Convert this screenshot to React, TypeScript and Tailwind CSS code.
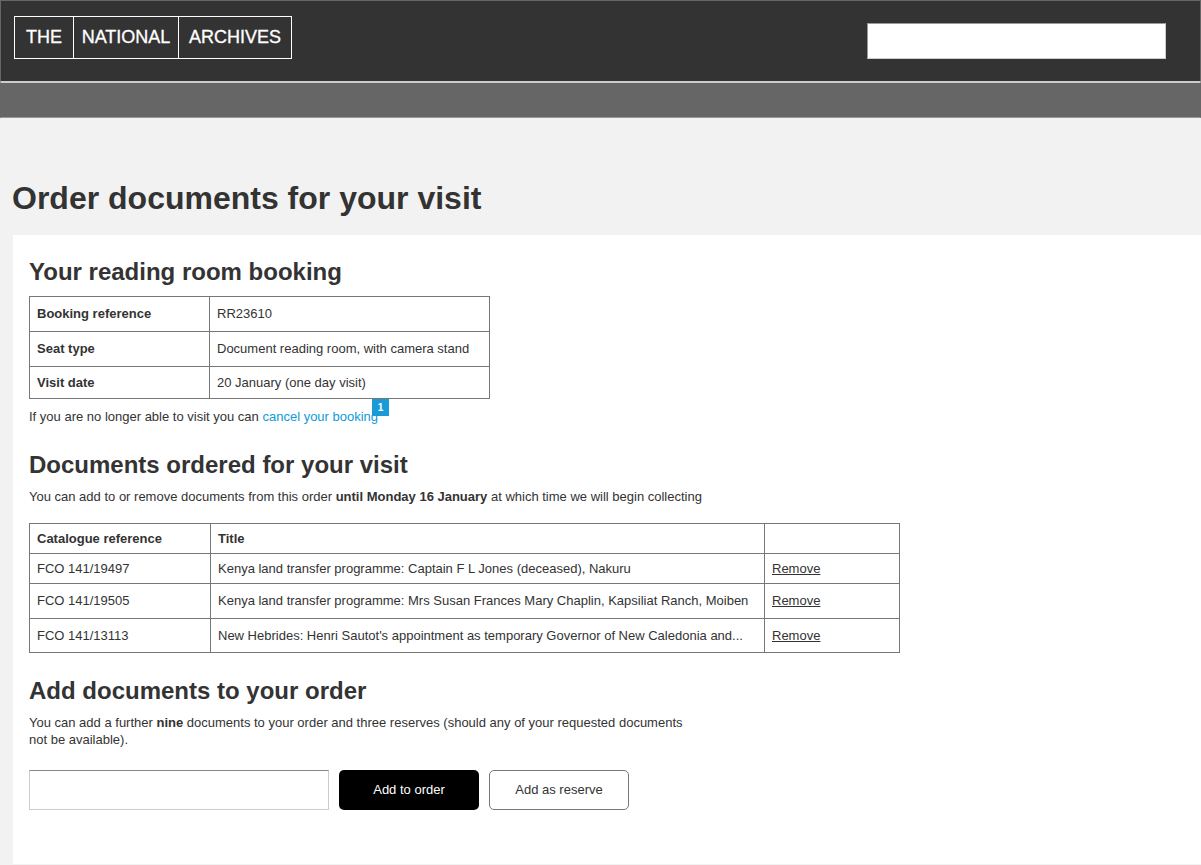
import React from "react";

const docs = [
  ["FCO 141/19497", "Kenya land transfer programme: Captain F L Jones (deceased), Nakuru", "h-[30px]", ""],
  ["FCO 141/19505", "Kenya land transfer programme: Mrs Susan Frances Mary Chaplin, Kapsiliat Ranch, Moiben", "h-[35px]", "pb-[2px]"],
  ["FCO 141/13113", "New Hebrides: Henri Sautot's appointment as temporary Governor of New Caledonia and...", "h-[34px]", ""],
];

const bookingRows = [
  ["Booking reference", "RR23610", "h-[35px]", "pb-[2px]"],
  ["Seat type", "Document reading room, with camera stand", "h-[35px]", "pb-[2px]"],
  ["Visit date", "20 January (one day visit)", "h-[32px]", ""],
];

export default function App() {
  return (
    <div className="min-h-[865px] bg-[#f2f2f2] text-[#333] text-[13px] leading-[17px] font-['Liberation_Sans',Arial,sans-serif]">
      <header className="h-[82px] bg-[#333] border border-[#666] border-b-[#ccc] flex justify-between pl-[13px] pr-[34px] pt-[15px]">
        <div className="flex h-[43px] border border-white text-white text-[18px] leading-[40px] box-border [-webkit-text-stroke:0.3px_white]">
          <div className="w-[59px] text-center border-r border-white">THE</div>
          <div className="w-[105px] text-center border-r border-white">NATIONAL</div>
          <div className="w-[112px] text-center">ARCHIVES</div>
        </div>
        <input className="w-[299px] h-[36px] mt-[7px] bg-white border border-[#ccc] border-t-[#999] border-l-[#999] box-border" aria-label="Search" />
      </header>
      <div className="h-[36px] bg-[#666] border border-[#666] border-t-[#ccc] border-b-[#999]" />
      <h1 className="mt-[62px] ml-[12px] h-[36px] text-[32px] leading-[36px] font-bold">Order documents for your visit</h1>
      <main className="mt-[19px] ml-[13px] h-[629px] bg-white pl-[16px] pt-[22px]">
        <h2 className="text-[24px] leading-[30px] font-bold">Your reading room booking</h2>
        <table className="mt-[9px] w-[461px] border-collapse table-fixed">
          <tbody>
            {bookingRows.map(([a, b, h, pad]) => (
              <tr key={a} className={h}>
                <th className={`w-[180px] border border-[#777] pl-[7px] text-left font-bold ${pad}`}>{a}</th>
                <td className={`border border-[#777] pl-[7px] ${pad}`}>{b}</td>
              </tr>
            ))}
          </tbody>
        </table>
        <p className="mt-[9px]">
          If you are no longer able to visit you can{" "}
          <span className="relative text-[#0f9bd7]">
            cancel your booking
            <span className="absolute -right-[11px] -top-[10px] w-[17px] h-[17px] bg-[#1a9bd7] text-white text-[10px] leading-[17px] font-bold text-center">1</span>
          </span>
        </p>
        <h2 className="mt-[25px] text-[24px] leading-[30px] font-bold">Documents ordered for your visit</h2>
        <p className="mt-[8px]">
          You can add to or remove documents from this order <b>until Monday 16 January</b> at which time we will begin collecting
        </p>
        <table className="mt-[18px] w-[871px] border-collapse table-fixed">
          <thead>
            <tr className="h-[30px]">
              <th className="w-[181px] border border-[#777] pl-[7px] text-left font-bold">Catalogue reference</th>
              <th className="w-[554px] border border-[#777] pl-[7px] text-left font-bold">Title</th>
              <th className="border border-[#777]" />
            </tr>
          </thead>
          <tbody>
            {docs.map(([ref, title, h, pad]) => (
              <tr key={ref} className={h}>
                <td className={`border border-[#777] pl-[7px] ${pad}`}>{ref}</td>
                <td className={`border border-[#777] pl-[7px] whitespace-nowrap overflow-hidden ${pad}`}>{title}</td>
                <td className={`border border-[#777] pl-[7px] underline ${pad}`}>Remove</td>
              </tr>
            ))}
          </tbody>
        </table>
        <h2 className="mt-[23px] text-[24px] leading-[30px] font-bold">Add documents to your order</h2>
        <p className="mt-[8px] w-[670px]">
          You can add a further <b>nine</b> documents to your order and three reserves (should any of your requested documents not be available).
        </p>
        <div className="mt-[22px] flex gap-[10px]">
          <input className="w-[300px] h-[40px] bg-white border border-[#ccc] border-t-[#888] box-border" aria-label="Catalogue reference" />
          <button className="w-[140px] h-[40px] pb-[2px] rounded-[5px] bg-black text-white">Add to order</button>
          <button className="w-[140px] h-[40px] pb-[2px] rounded-[5px] bg-white border border-[#777]">Add as reserve</button>
        </div>
      </main>
    </div>
  );
}
